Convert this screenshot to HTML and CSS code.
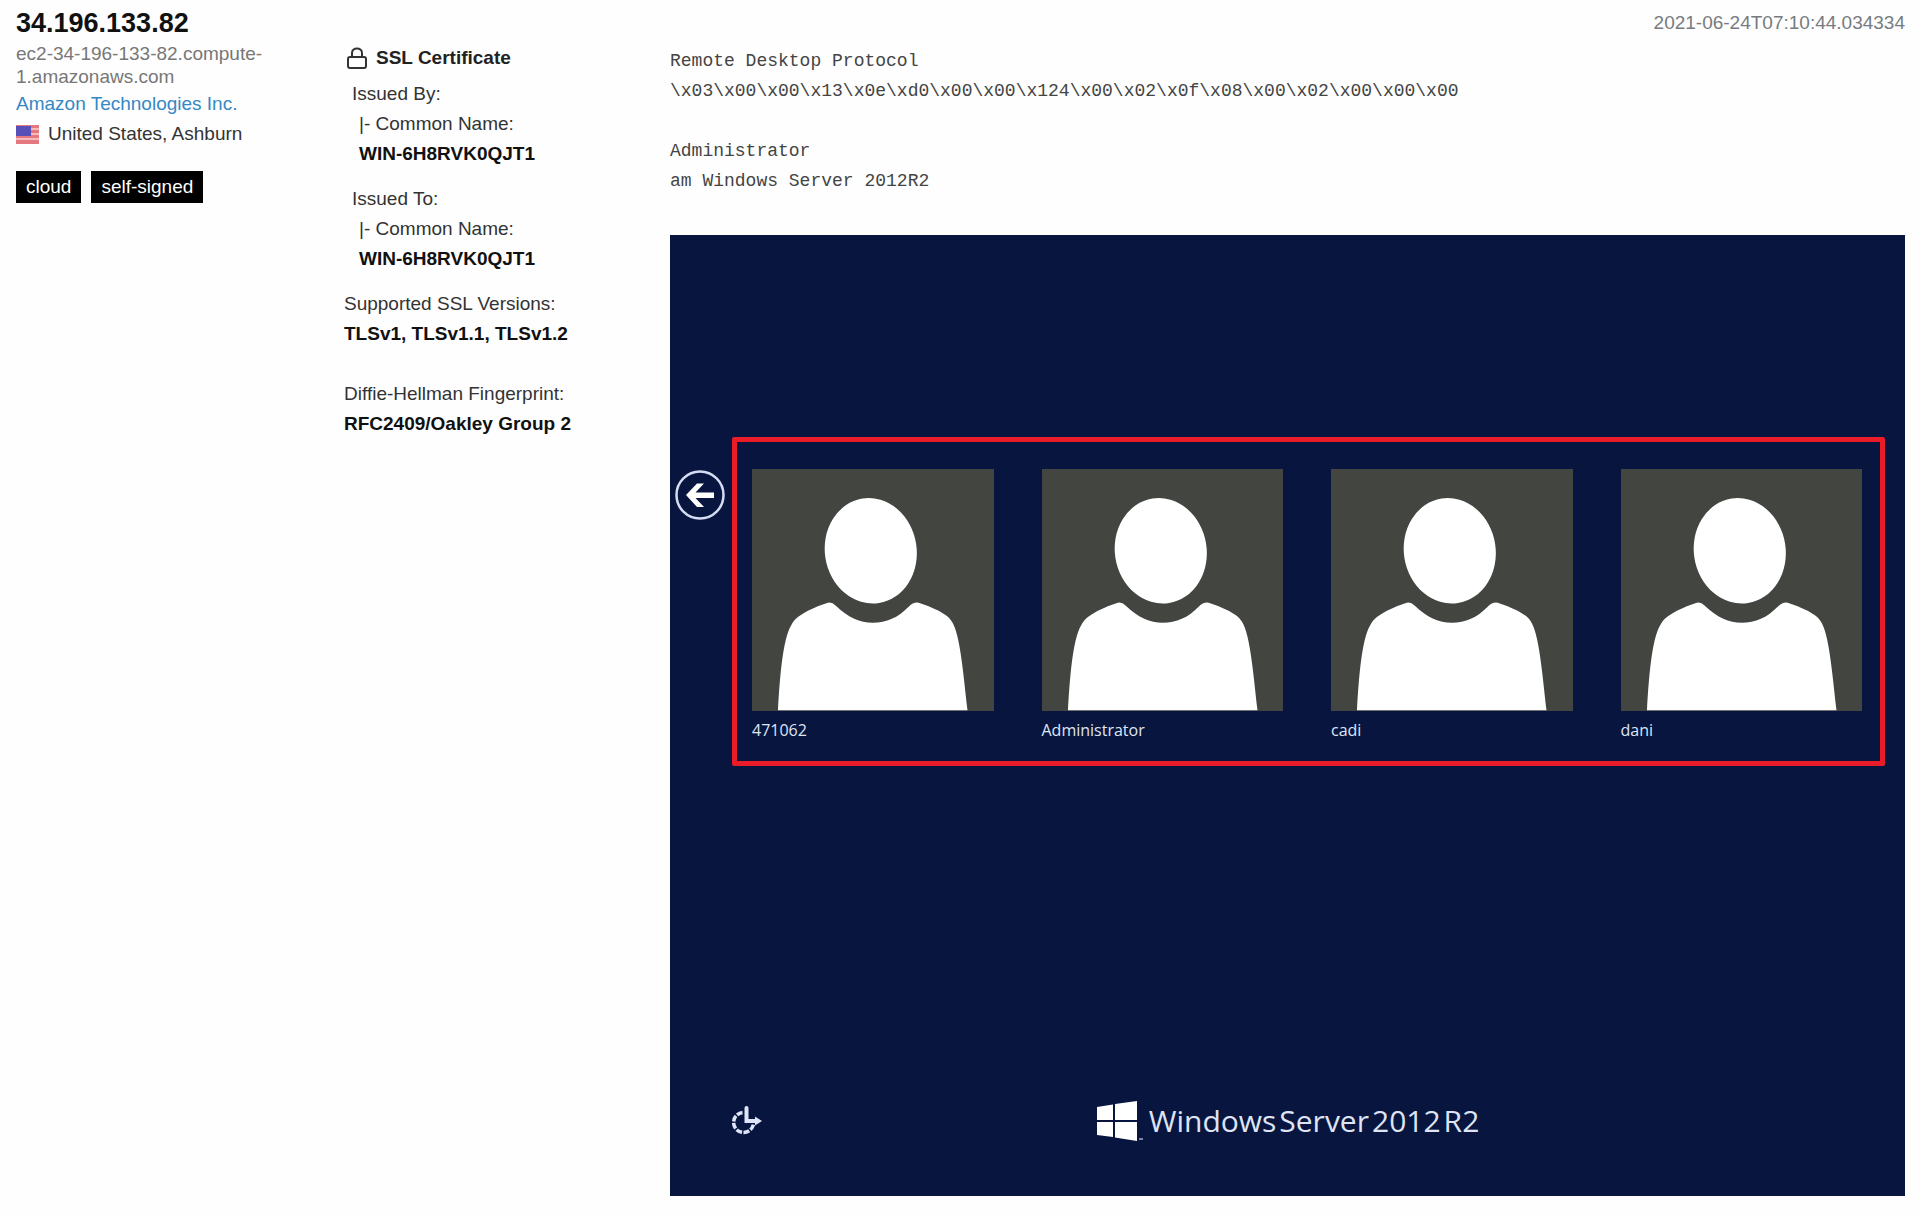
FILE: index.html
```html
<!DOCTYPE html>
<html lang="en">
<head>
<meta charset="utf-8">
<title>34.196.133.82</title>
<link rel="stylesheet" href="styles.css">
</head>
<body>
<svg class="defs" width="0" height="0" aria-hidden="true">
  <symbol id="avatar" viewBox="0 0 242 242">
    <ellipse cx="119" cy="82" rx="46" ry="53" transform="rotate(-9 119 82)"/>
    <path d="M26 242C28 207 31 171 39 157C43 149 49 146 56 142C63 139 69 136 76 134Q80 133 84 137C97 149 108 154 121 154C135 154 146 149 157 138Q162 133 167 134C174 136 180 139 187 142C194 146 199 149 202 156C209 171 212 207 216 242Z"/>
  </symbol>
</svg>
<article class="result">
  <header class="result-head">
    <h1 class="ip">34.196.133.82</h1>
    <time class="timestamp">2021-06-24T07:10:44.034334</time>
  </header>
  <div class="columns">
    <section class="host">
      <p class="hostname">ec2-34-196-133-82.compute-1.amazonaws.com</p>
      <a class="org" href="#">Amazon Technologies Inc.</a>
      <p class="place">
        <svg class="flag" viewBox="0 0 23 19" aria-hidden="true">
          <path fill="#f4b9bc" d="M0 0h23v19H0z"/>
          <path fill="#e5787e" d="M0 0h23v3H0zM0 5h23v3H0zM0 10h23v3H0zM0 15h23v4H0z"/>
          <path fill="#5750b8" d="M0 1h15v10H0z"/>
        </svg>
        <span>United States, Ashburn</span>
      </p>
      <div class="tags"><span class="tag">cloud</span><span class="tag">self-signed</span></div>
    </section>
    <section class="cert">
      <h2 class="cert-title">
        <svg class="lock" viewBox="0 0 20 22" fill="none" stroke="#333" stroke-width="2" aria-hidden="true">
          <rect x="1" y="10" width="18" height="11" rx="2"/>
          <path d="M5 10V6C5 0 15 0 15 6V10"/>
        </svg>
        <span>SSL Certificate</span>
      </h2>
      <dl class="issue">
        <dt>Issued By:</dt>
        <dd>|- Common Name:</dd>
        <dd><strong>WIN-6H8RVK0QJT1</strong></dd>
      </dl>
      <dl class="issue">
        <dt>Issued To:</dt>
        <dd>|- Common Name:</dd>
        <dd><strong>WIN-6H8RVK0QJT1</strong></dd>
      </dl>
      <p class="fact">Supported SSL Versions:<br><strong>TLSv1, TLSv1.1, TLSv1.2</strong></p>
      <p class="fact">Diffie-Hellman Fingerprint:<br><strong>RFC2409/Oakley Group 2</strong></p>
    </section>
    <section class="service">
<pre class="banner">Remote Desktop Protocol
\x03\x00\x00\x13\x0e\xd0\x00\x00\x124\x00\x02\x0f\x08\x00\x02\x00\x00\x00

Administrator
am Windows Server 2012R2</pre>
      <div class="screen">
        <div class="login">
          <button class="back" type="button" aria-label="Back">
            <svg viewBox="0 0 50 50" fill="none" aria-hidden="true">
              <circle cx="25" cy="25" r="23.500" stroke="#d5dcf2" stroke-width="2.500"/>
              <path fill="#fff" d="M11 25L22 13.500H29L20.500 22.500H39V28H20.500L29 37H22Z"/>
            </svg>
          </button>
          <ul class="users">
            <li><button class="user" type="button"><svg class="avatar"><use href="#avatar"/></svg><span>471062</span></button></li>
            <li><button class="user" type="button"><svg class="avatar"><use href="#avatar"/></svg><span>Administrator</span></button></li>
            <li><button class="user" type="button"><svg class="avatar"><use href="#avatar"/></svg><span>cadi</span></button></li>
            <li><button class="user" type="button"><svg class="avatar"><use href="#avatar"/></svg><span>dani</span></button></li>
          </ul>
        </div>
        <footer class="screen-foot">
          <button class="ease" type="button" aria-label="Ease of access">
            <svg viewBox="0 0 30 30" fill="none" stroke="#dfe5f8" aria-hidden="true">
              <path stroke-width="3.500" stroke-dasharray="6 1.500" d="M10.500 6.500A10 10 0 1 0 21.500 18"/>
              <path stroke-width="4" stroke-linecap="round" d="M14.500 2V15H24"/>
              <path fill="#dfe5f8" stroke="none" d="M23 10.500L30 15L23 19.500Z"/>
            </svg>
          </button>
          <div class="brand">
            <svg class="win" viewBox="0 0 46 40" fill="#fff" aria-hidden="true">
              <path d="M0 6L16 3.500V19H0ZM18 3L40 0V19H18ZM0 21H16V36L0 34ZM18 21H40V40L18 36.500Z"/>
              <path fill="#7d86a6" d="M42 37h4v2h-4z"/>
            </svg>
            <p class="brand-name"><span>Windows</span> <span>Server</span> <span>2012</span> <span>R2</span></p>
          </div>
        </footer>
      </div>
    </section>
  </div>
</article>
</body>
</html>
```
FILE: styles.css
```css
* { box-sizing: border-box; }

body, h1, h2, p, dl, dd, ul, pre { margin: 0; }

body {
  background: #fefefe;
  color: #333;
  font: 19px/30px "Liberation Sans", Arial, sans-serif;
}

button {
  padding: 0;
  border: 0;
  background: none;
  color: inherit;
  font: inherit;
  cursor: pointer;
}

ul { padding: 0; }

svg { display: block; }

.defs { position: absolute; }

.result { padding: 8px 15px 8px 16px; }

.result-head {
  display: flex;
  justify-content: space-between;
}

.ip {
  color: #111;
  font-size: 27px;
  line-height: 30px;
}

.timestamp { color: #777b80; }

.columns {
  display: grid;
  grid-template-columns: 328px 326px minmax(0, 1fr);
}

.host { padding: 4px 60px 0 0; }

.hostname {
  color: #777;
  line-height: 23px;
}

.org {
  display: block;
  margin-top: 1px;
  color: #3488c4;
  text-decoration: none;
}

.place {
  display: flex;
  align-items: center;
  gap: 9px;
}

.flag {
  width: 23px;
  height: 19px;
}

.tags {
  display: flex;
  gap: 10px;
  margin-top: 22px;
}

.tag {
  padding: 0 10px;
  background: #000;
  color: #fff;
  line-height: 32px;
}

.cert { padding-top: 5px; }

.cert-title {
  display: flex;
  align-items: center;
  gap: 9px;
  margin-bottom: 6px;
  padding-left: 3px;
  color: #222;
  font-size: 19px;
}

.lock {
  width: 20px;
  height: 22px;
}

.issue {
  margin-bottom: 15px;
  padding-left: 8px;
}

.issue dd { padding-left: 7px; }

.cert strong { color: #111; }

.fact { margin-bottom: 30px; }

.service { padding-top: 8px; }

.banner {
  margin-bottom: 39px;
  color: #444;
  font: 18px/30px "Liberation Mono", Consolas, monospace;
  white-space: pre-wrap;
}

.screen {
  display: flex;
  flex-direction: column;
  padding: 202px 20px 54px 5px;
  aspect-ratio: 1235 / 961;
  background: #08163f;
  color: #dfe4f5;
  font-family: "Open Sans", "Noto Sans", sans-serif;
}

.login {
  display: flex;
  align-items: flex-start;
  gap: 7px;
}

.back {
  flex: none;
  width: 50px;
  margin-top: 33px;
}

.users {
  display: grid;
  flex: 1;
  grid-template-columns: repeat(4, minmax(0, 1fr));
  gap: 48px;
  padding: 27px 18px 15px 15px;
  border: 5px solid #ea1c2a;
  border-radius: 2px;
  list-style: none;
}

.user {
  display: block;
  width: 100%;
  font-size: 16px;
  line-height: 32px;
  text-align: left;
}

.user span {
  display: block;
  padding-top: 3px;
}

.avatar {
  width: 100%;
  aspect-ratio: 1;
  background: #434541;
  fill: #fff;
}

.screen-foot {
  display: grid;
  grid-template-columns: 1fr auto 1fr;
  align-items: center;
  margin-top: auto;
  padding-left: 57px;
}

.ease { width: 30px; }

.brand {
  display: flex;
  align-items: center;
  gap: 6px;
  margin-right: 41px;
}

.win {
  width: 46px;
  height: 40px;
}

.brand-name {
  display: flex;
  gap: 3px;
  font-size: 30px;
  line-height: 42px;
}
```
